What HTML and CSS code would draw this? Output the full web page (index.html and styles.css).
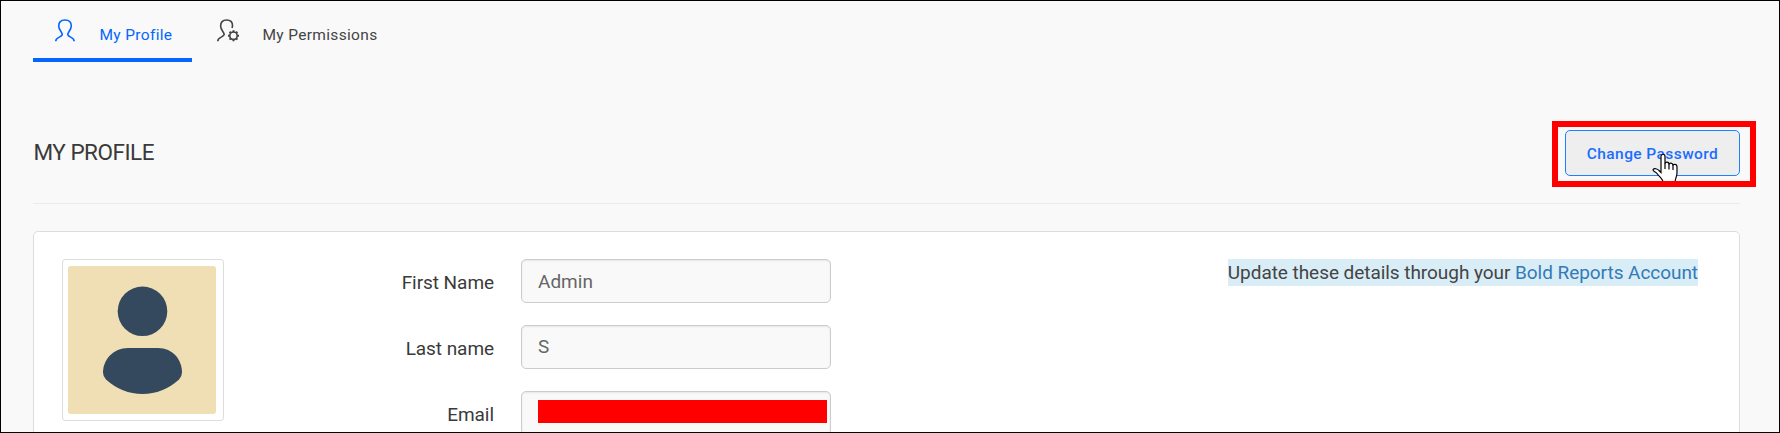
FILE: index.html
```html
<!DOCTYPE html>
<html lang="en">
<head>
<meta charset="utf-8">
<title>My Profile</title>
<link rel="stylesheet" href="styles.css">
</head>
<body>
<div class="page">
  <nav class="tabs">
    <a class="tab active">
      <svg class="tab-icon" width="24" height="24" viewBox="0 0 24 24"><path d="M2.700 23.200C3 18.800 8.400 19.600 9.300 16.500C9.500 14.800 5.700 12 5.700 8C5.700 3.600 8.400 2 12 2C15.600 2 18.300 3.600 18.300 8C18.300 12 14.500 14.800 14.700 16.500C15.600 19.600 20.800 18.800 21.200 23.200"/></svg>
      <span>My Profile</span>
    </a>
    <a class="tab">
      <svg class="tab-icon" width="24" height="24" viewBox="0 0 24 24"><path d="M1.700 23.200C2 18.800 7.200 19.600 8.200 16.500C8.400 14.800 4.600 12 4.600 8C4.600 3.600 7.300 2 10.600 2C14 2 16.500 3.600 16.500 7.600L16.100 10"/><circle cx="17.500" cy="17.700" r="3.700"/><path class="teeth" d="M17.500 12.200v2M17.500 21.200v2M12 17.700h2M21 17.700h2M13.600 13.800l1.400 1.400M20 20.200l1.400 1.400M13.600 21.600l1.400-1.400M20 15.200l1.400-1.400"/></svg>
      <span>My Permissions</span>
    </a>
  </nav>
  <header class="heading">
    <h1>MY PROFILE</h1>
    <div class="action">
      <button class="change">Change Password</button>
      <svg class="cursor" width="27" height="32" viewBox="0 0 27 32"><path d="M9 18V3.500C9 .5 13 .5 13 3.500V11C13 8.500 17 8.500 17 11.500C17 9.500 21 9.500 21 12.500C21 10.800 25 10.800 25 13.500V20C25 24 23 25 23 30H11.500C11 26 7 23.500 5 20.500C3.500 18.500 1 18.500 1 16.800C2 15 5.500 15.500 7 17.500L9 19.500Z"/><path d="M13 10.500v5.500M17 11v5.500M21 12v5"/></svg>
      <div class="marker"></div>
    </div>
  </header>
  <main class="card">
    <div class="thumb">
      <svg width="148" height="148" viewBox="0 0 148 148"><rect width="148" height="148" rx="3" fill="#f0dfb4"/><circle cx="74.500" cy="45.300" r="24.800" fill="#34495e"/><path fill="#34495e" d="M60 82H90C105 82 114 94 114 106.500Q114 110.500 111 113.500Q95 128 74.500 128Q54 128 38 113.500Q35 110.500 35 106.500C35 94 45 82 60 82Z"/></svg>
    </div>
    <form class="fields">
      <div class="row"><label>First Name</label><div class="input">Admin</div></div>
      <div class="row"><label>Last name</label><div class="input raised">S</div></div>
      <div class="row"><label>Email</label><div class="input"><span class="redacted"></span></div></div>
    </form>
    <div class="note">Update these details through your <a>Bold Reports Account</a></div>
  </main>
</div>
</body>
</html>
```
FILE: styles.css
```css
* { box-sizing: border-box; }
body { margin: 0; font-family: Roboto, sans-serif; color: #333; }
.page { height: 433px; overflow: hidden; border: 1px solid #000; background: #f9f9f9; padding: 0 39px 0 32px; }
.tabs { display: flex; gap: 4px; height: 61px; }
.tab { display: flex; padding: 17px 20px 0; gap: 22.500px; border-bottom: 4px solid transparent; font-size: 15.500px; line-height: 34px; letter-spacing: .33px; white-space: nowrap; color: #444; }
.tab.active { width: 159px; color: #0565ff; border-color: #0565ff; }
.tab-icon { flex: none; fill: none; stroke: currentColor; stroke-width: 1.600; }
.teeth { stroke-width: 2; }
.heading { display: flex; justify-content: space-between; height: 142px; padding-top: 68px; border-bottom: 1px solid #ebebeb; }
.heading h1 { margin: 9px 0 0 .5px; font-size: 22.500px; font-weight: 400; line-height: 26px; letter-spacing: -.5px; color: #3a3a3a; }
.action { position: relative; width: 175px; height: 46px; }
.change { width: 175px; height: 46px; padding: 2px 0 0; border: 1px solid #1a82ff; border-radius: 5px; background: #eee; color: #1a6dff; font: 500 15.500px Roboto, sans-serif; letter-spacing: .42px; }
.cursor { position: absolute; left: 87px; top: 23px; fill: #fff; stroke: #000; stroke-width: 1.200; }
.marker { position: absolute; left: -13px; top: -9px; width: 204px; height: 66px; border: 6px solid #f00; }
.card { display: flex; margin-top: 27px; height: 260px; border: 1px solid #ddd; border-radius: 5px; background: #fff; padding: 27px 91px 0 28px; }
.thumb { flex: none; width: 162px; height: 162px; border: 1px solid #ddd; border-radius: 3px; padding: 6px 0 0 5px; }
.thumb svg { display: block; }
.fields { display: grid; grid-auto-rows: 44px; gap: 22px; align-content: start; margin-left: 150px; }
.row { display: grid; grid-template-columns: 120px 310px; gap: 27px; height: 44px; }
.row label { text-align: right; font-size: 19px; line-height: 47px; letter-spacing: -.06px; color: #3a3a3a; }
.input { height: 44px; border: 1px solid #ccc; border-radius: 5px; background: #f9f9f9; box-shadow: inset 0 1px 2px rgba(0,0,0,.08); padding: 0 3px 0 16px; font-size: 19px; line-height: 43px; color: #666; }
.raised { line-height: 41px; }
.redacted { display: block; width: 289px; height: 23px; margin-top: 8px; background: #f00; }
.note { height: 27px; margin: 0 -50px 0 auto; background: #d9edf7; font-size: 19px; line-height: 27px; letter-spacing: -.05px; white-space: nowrap; color: #444; }
.note a { color: #337ab7; }
```
